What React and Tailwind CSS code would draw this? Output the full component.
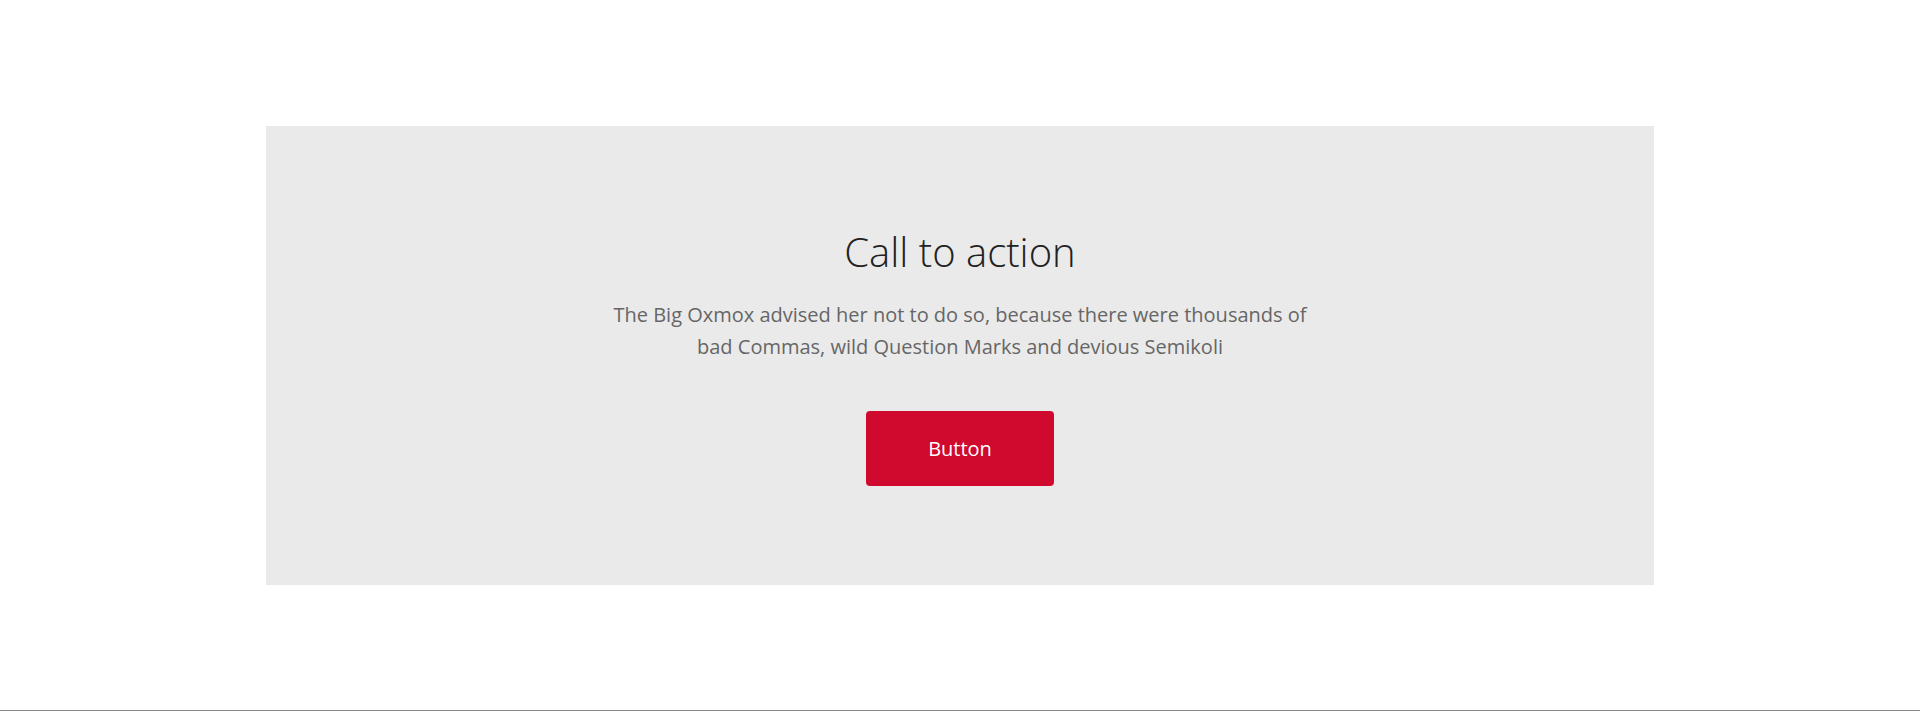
export default function App() {
  return (
    <div
      className="h-[711px] bg-white border-b border-[#888888] pt-[126px]"
      style={{ fontFamily: '"Open Sans", sans-serif' }}
    >
      {/* Call to action panel */}
      <section className="mx-auto w-[1388px] h-[459px] bg-[#eaeaea] flex flex-col items-center pt-[100px]">
        <h2 className="text-[40px] font-light leading-[52px] text-[#222222]">
          Call to action
        </h2>
        <p className="mt-[21px] max-w-[710px] text-center text-[20px] leading-[32px] text-[#666666]">
          The Big Oxmox advised her not to do so, because there were thousands of bad Commas,
          wild Question Marks and devious Semikoli
        </p>
        <button className="mt-[48px] w-[188px] h-[75px] rounded-[4px] bg-[#d0092f] text-white text-[20px]">
          Button
        </button>
      </section>
    </div>
  );
}
